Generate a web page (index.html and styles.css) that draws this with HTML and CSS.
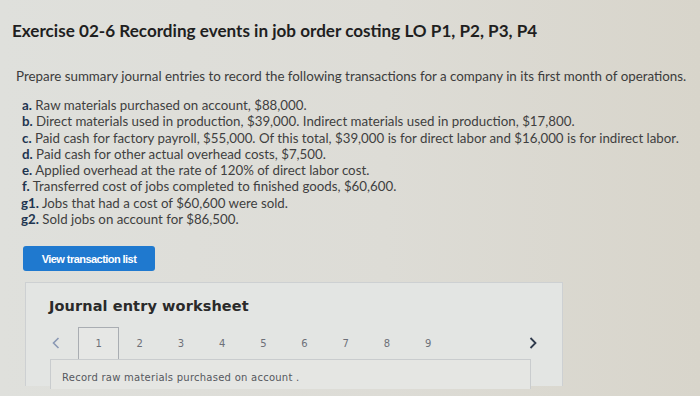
FILE: index.html
```html
<!DOCTYPE html>
<html>
<head>
<meta charset="utf-8">
<link rel="stylesheet" href="styles.css">
</head>
<body>
<div class="page">
  <h1 class="title">Exercise 02-6 Recording events in job order costing LO P1, P2, P3, P4</h1>
  <p class="intro">Prepare summary journal entries to record the following transactions for a company in its first month of operations.</p>
  <ul class="items">
    <li><b>a.</b> Raw materials purchased on account, $88,000.</li>
    <li><b>b.</b> Direct materials used in production, $39,000. Indirect materials used in production, $17,800.</li>
    <li><b>c.</b> Paid cash for factory payroll, $55,000. Of this total, $39,000 is for direct labor and $16,000 is for indirect labor.</li>
    <li><b>d.</b> Paid cash for other actual overhead costs, $7,500.</li>
    <li><b>e.</b> Applied overhead at the rate of 120% of direct labor cost.</li>
    <li><b>f.</b> Transferred cost of jobs completed to finished goods, $60,600.</li>
    <li class="g"><b>g1.</b> Jobs that had a cost of $60,600 were sold.</li>
    <li class="g"><b>g2.</b> Sold jobs on account for $86,500.</li>
  </ul>
  <button class="btn">View transaction list</button>
  <section class="panel">
    <h2 class="panel-title">Journal entry worksheet</h2>
    <div class="tabs">
      <span class="arrow prev"><svg width="8" height="12" viewBox="0 0 8 12"><path d="M6.5 1 L1.5 6 L6.5 11" fill="none" stroke="#8a98b4" stroke-width="1.6"/></svg></span>
      <span class="tab active">1</span>
      <span class="tab">2</span>
      <span class="tab">3</span>
      <span class="tab">4</span>
      <span class="tab">5</span>
      <span class="tab">6</span>
      <span class="tab">7</span>
      <span class="tab">8</span>
      <span class="tab">9</span>
      <span class="spacer"></span>
      <span class="arrow next"><svg width="8" height="12" viewBox="0 0 8 12"><path d="M1.5 1 L6.5 6 L1.5 11" fill="none" stroke="#2f3a4c" stroke-width="1.8"/></svg></span>
    </div>
    <div class="content">Record raw materials purchased on account .</div>
  </section>
</div>
</body>
</html>
```

FILE: styles.css
```css
html, body {
  margin: 0;
  padding: 0;
}
body {
  width: 700px;
  height: 396px;
  overflow: hidden;
  background: linear-gradient(90deg, #dfe0dc 0%, #dddcd6 55%, #d8d5cb 100%);
  font-family: Lato, "Open Sans", sans-serif;
  color: #3c3c3c;
}
.page {
  padding: 20px 0 0 12px;
}
.title {
  margin: 0;
  font-size: 17.1px;
  line-height: 22px;
  font-weight: 700;
  color: #1f1f1f;
}
.intro {
  margin: 25px 0 0 4px;
  font-size: 13.35px;
  line-height: 18px;
  color: #3c3c3c;
}
.items {
  list-style: none;
  margin: 12px 0 0 10px;
  padding: 0;
  font-size: 13.3px;
  line-height: 16.3px;
  color: #3f3f3f;
}
.items b {
  color: #1e3550;
  font-weight: 700;
}
.items .g {
  margin-left: -1px;
}
.btn {
  display: block;
  margin: 19px 0 0 11px;
  width: 132px;
  height: 25px;
  border: none;
  border-radius: 3px;
  background: #1f79cf;
  color: #fff;
  font-family: "Liberation Sans", Arial, sans-serif;
  font-weight: 700;
  font-size: 11px;
  letter-spacing: -0.55px;
  padding: 0;
}
.panel {
  margin: 11px 0 0 13px;
  width: 538px;
  height: 104px;
  box-sizing: border-box;
  border: 1px solid #cdd0d2;
  border-bottom: none;
  background: #e3e5e3;
  padding: 13px 0 0 24px;
}
.panel-title {
  margin: 0 0 0 -1px;
  font-family: "DejaVu Sans", Verdana, sans-serif;
  font-size: 14.5px;
  line-height: 20px;
  font-weight: 700;
  color: #2a2a2a;
  letter-spacing: 0.1px;
}
.tabs {
  display: flex;
  align-items: stretch;
  margin-top: 11px;
  height: 32px;
  width: 481px;
  font-family: "DejaVu Sans", Verdana, sans-serif;
  font-size: 10px;
  color: #6d7078;
}
.arrow {
  display: flex;
  align-items: center;
}
.prev {
  width: 28px;
  padding-left: 2px;
  box-sizing: border-box;
}
.tab {
  width: 41.2px;
  display: flex;
  align-items: center;
  justify-content: center;
  box-sizing: border-box;
}
.tab.active {
  border: 1px solid #a9adb2;
  border-bottom: none;
  background: #e6e7e5;
}
.spacer {
  flex: 1;
}
.next {
  width: 16px;
  justify-content: center;
  margin-right: -10px;
}
.content {
  width: 481px;
  height: 30px;
  box-sizing: border-box;
  border: 1px solid #c9ccce;
  border-bottom: none;
  background: #e5e6e3;
  padding: 12px 0 0 11px;
  font-family: "DejaVu Sans", Verdana, sans-serif;
  font-size: 10px;
  color: #55585e;
  letter-spacing: 0.25px;
}
```
